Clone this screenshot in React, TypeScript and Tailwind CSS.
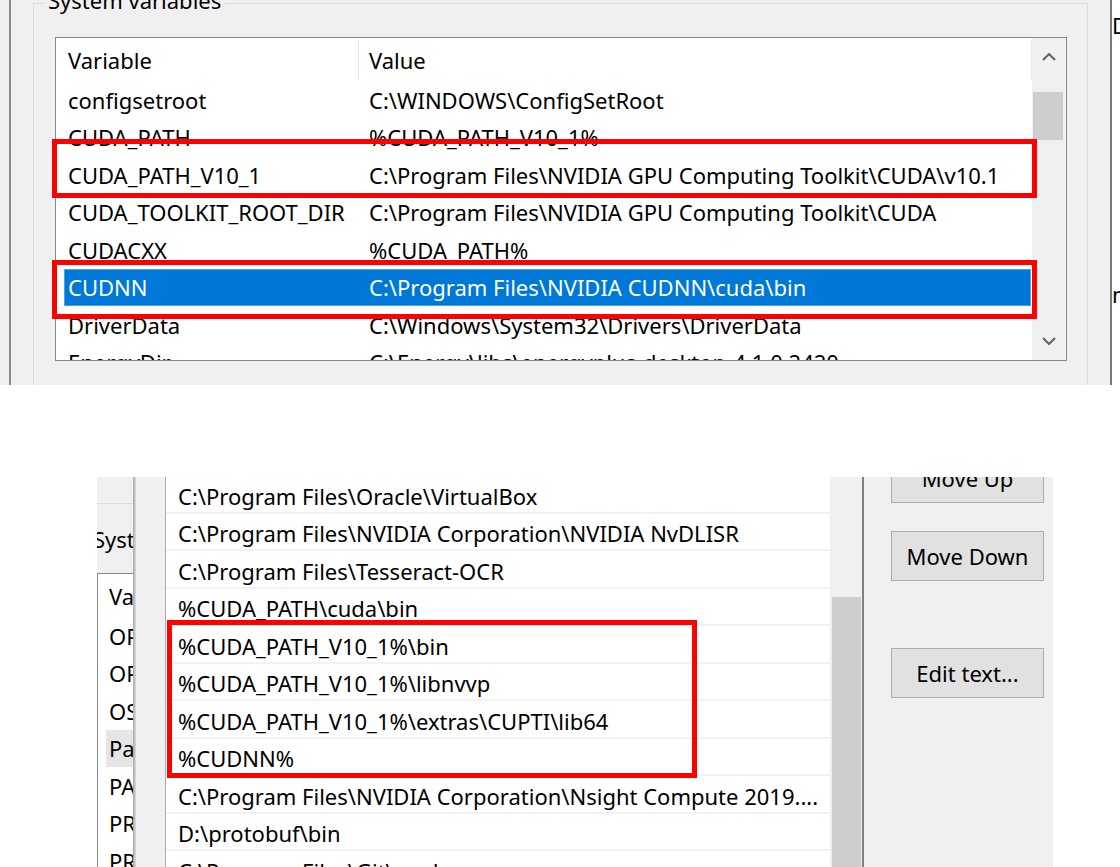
const topRows = [
  ['configsetroot', 'C:\\WINDOWS\\ConfigSetRoot'],
  ['CUDA_PATH', '%CUDA_PATH_V10_1%'],
  ['CUDA_PATH_V10_1', 'C:\\Program Files\\NVIDIA GPU Computing Toolkit\\CUDA\\v10.1'],
  ['CUDA_TOOLKIT_ROOT_DIR', 'C:\\Program Files\\NVIDIA GPU Computing Toolkit\\CUDA'],
  ['CUDACXX', '%CUDA_PATH%'],
  ['CUDNN', 'C:\\Program Files\\NVIDIA CUDNN\\cuda\\bin'],
  ['DriverData', 'C:\\Windows\\System32\\Drivers\\DriverData'],
  ['EnergyDir', 'C:\\Energy\\libs\\energyplus-desktop-4.1.0.2420'],
]

const pathRows = [
  'C:\\Program Files\\Oracle\\VirtualBox',
  'C:\\Program Files\\NVIDIA Corporation\\NVIDIA NvDLISR',
  'C:\\Program Files\\Tesseract-OCR',
  '%CUDA_PATH\\cuda\\bin',
  '%CUDA_PATH_V10_1%\\bin',
  '%CUDA_PATH_V10_1%\\libnvvp',
  '%CUDA_PATH_V10_1%\\extras\\CUPTI\\lib64',
  '%CUDNN%',
  'C:\\Program Files\\NVIDIA Corporation\\Nsight Compute 2019....',
  'D:\\protobuf\\bin',
  'C:\\Program Files\\Git\\cmd',
]

const backRows = ['OPENCV_DIR', 'OPENCV_VER', 'OS', 'Path', 'PATHEXT', 'PROCESSOR_ARCHITECTURE', 'PROCESSOR_IDENTIFIER']

function Chevron({ up }: { up?: boolean }) {
  return (
    <svg width="14" height="8" viewBox="0 0 14 8">
      <polyline
        points={up ? '1,7 7,1 13,7' : '1,1 7,7 13,1'}
        fill="none"
        stroke="#606060"
        strokeWidth="2"
      />
    </svg>
  )
}

function Button({ label }: { label: string }) {
  return (
    <div className="flex h-[50px] w-[153px] shrink-0 items-center justify-center border border-[#adadad] bg-[#e1e1e1]">
      {label}
    </div>
  )
}

export default function App() {
  return (
    <div className="h-[867px] w-[1120px] overflow-hidden bg-white font-['Noto_Sans','Open_Sans',sans-serif] text-[22px] leading-none text-black">
      {/* System variables dialog */}
      <div className="relative flex h-[385px] overflow-hidden bg-[#f0f0f0]">
        <div className="w-[9px] shrink-0" />
        <div className="w-[2px] shrink-0 bg-[#8a8a8a]" />
        <div className="w-[22px] shrink-0" />

        {/* group box */}
        <div className="relative mt-[3px] h-[420px] w-[1055px] shrink-0 border-x border-t border-[#dcdcdc] pl-[21px] pt-[33px]">
          <span className="absolute -top-[15px] left-[10px] bg-[#f0f0f0] px-[4px]">System variables</span>

          <div className="flex h-[324px] w-[1012px] border border-[#828790] bg-white">
            <div className="flex w-[976px] flex-col overflow-hidden">
              <div className="flex h-[43px] shrink-0 items-center">
                <div className="w-[302px] pl-[12px]">Variable</div>
                <div className="h-[40px] w-px bg-[#e5e5e5]" />
                <div className="flex-1 pl-[10px]">Value</div>
                <div className="h-[40px] w-px bg-[#e5e5e5]" />
              </div>
              {topRows.map(([name, value]) => {
                const sel = name === 'CUDNN'
                return (
                  <div key={name} className="flex h-[37.5px] shrink-0 pl-[8px] pr-[1px]">
                    <div
                      className={
                        sel
                          ? 'flex flex-1 items-center bg-[#0078d7] text-white shadow-[inset_0_0_0_1px_#4ea3e6]'
                          : 'flex flex-1 items-center'
                      }
                    >
                      <div className="w-[294px] whitespace-nowrap pl-[4px]">{name}</div>
                      <div className="whitespace-nowrap pl-[11px]">{value}</div>
                    </div>
                  </div>
                )
              })}
            </div>

            {/* scrollbar */}
            <div className="flex w-[34px] flex-col bg-[#f0f0f0]">
              <div className="flex h-[38px] items-center justify-center">
                <Chevron up />
              </div>
              <div className="h-[16px]" />
              <div className="ml-[1px] h-[48px] w-[30px] bg-[#cdcdcd]" />
              <div className="flex-1" />
              <div className="flex h-[38px] items-center justify-center">
                <Chevron />
              </div>
            </div>
          </div>
        </div>

        <div className="w-[22px] shrink-0" />
        <div className="w-[2px] shrink-0 bg-[#7a7a7a]" />
        <div className="flex flex-1 flex-col overflow-hidden bg-white">
          <div className="mt-[14px] h-[24px] whitespace-nowrap">D</div>
          <div className="mt-[245px] whitespace-nowrap">n</div>
        </div>

        {/* highlight boxes */}
        <div className="absolute left-[52px] top-[139px] h-[59px] w-[985px] border-[5px] border-[#ff0000]" />
        <div className="absolute left-[52px] top-[260px] h-[59px] w-[985px] border-[5px] border-[#ff0000]" />
      </div>

      {/* Edit environment variable dialog */}
      <div className="relative mt-[92px] flex h-[390px] overflow-hidden">
        <div className="w-[97px] shrink-0" />

        {/* window behind */}
        <div className="flex w-[36px] shrink-0 flex-col overflow-hidden bg-[#f0f0f0]">
          <div className="h-[27px] shrink-0 border-b border-[#dadada]" />
          <div className="flex h-[69px] shrink-0 items-center">
            <span className="-ml-[4px] whitespace-nowrap">System variables</span>
          </div>
          <div className="flex flex-1 flex-col border-l border-t border-[#828790] bg-white">
            <div className="flex h-[43px] shrink-0 items-center whitespace-nowrap pl-[11px]">Variable</div>
            {backRows.map((r) => (
              <div key={r} className="flex h-[37.5px] shrink-0 pl-[8px]">
                <div
                  className={
                    r === 'Path'
                      ? 'flex flex-1 items-center whitespace-nowrap bg-[#e5e5e5] pl-[3px]'
                      : 'flex flex-1 items-center whitespace-nowrap pl-[3px]'
                  }
                >
                  {r}
                </div>
              </div>
            ))}
          </div>
        </div>
        <div className="w-[3px] shrink-0 bg-linear-to-r from-[#a4a4a4] to-[#dedede]" />

        {/* front window */}
        <div className="flex w-[917px] shrink-0 bg-[#f0f0f0]">
          <div className="w-[29px] shrink-0" />
          <div className="flex w-[699px] shrink-0 border-l border-[#a9a9a9] border-r-2 border-r-[#7f7f7f]">
            <div className="-mt-px flex w-[664px] flex-col bg-white">
              {pathRows.map((p) => (
                <div
                  key={p}
                  className="flex h-[37.5px] shrink-0 items-center overflow-hidden whitespace-nowrap border-b-2 border-[#f2f2f2] pl-[12px] pt-[4px]"
                >
                  {p}
                </div>
              ))}
            </div>
            <div className="flex flex-1 flex-col bg-[#f0f0f0]">
              <div className="h-[120px]" />
              <div className="ml-[2px] w-[29px] flex-1 bg-[#cdcdcd]" />
            </div>
          </div>
          <div className="flex flex-col pl-[27px]">
            <div className="-mt-[24px]">
              <Button label="Move Up" />
            </div>
            <div className="mt-[28px]">
              <Button label="Move Down" />
            </div>
            <div className="mt-[67px]">
              <Button label="Edit text..." />
            </div>
          </div>
        </div>

        <div className="flex-1" />

        <div className="absolute left-[167px] top-[143px] h-[158px] w-[530px] border-[5px] border-[#ff0000]" />
      </div>
    </div>
  )
}
